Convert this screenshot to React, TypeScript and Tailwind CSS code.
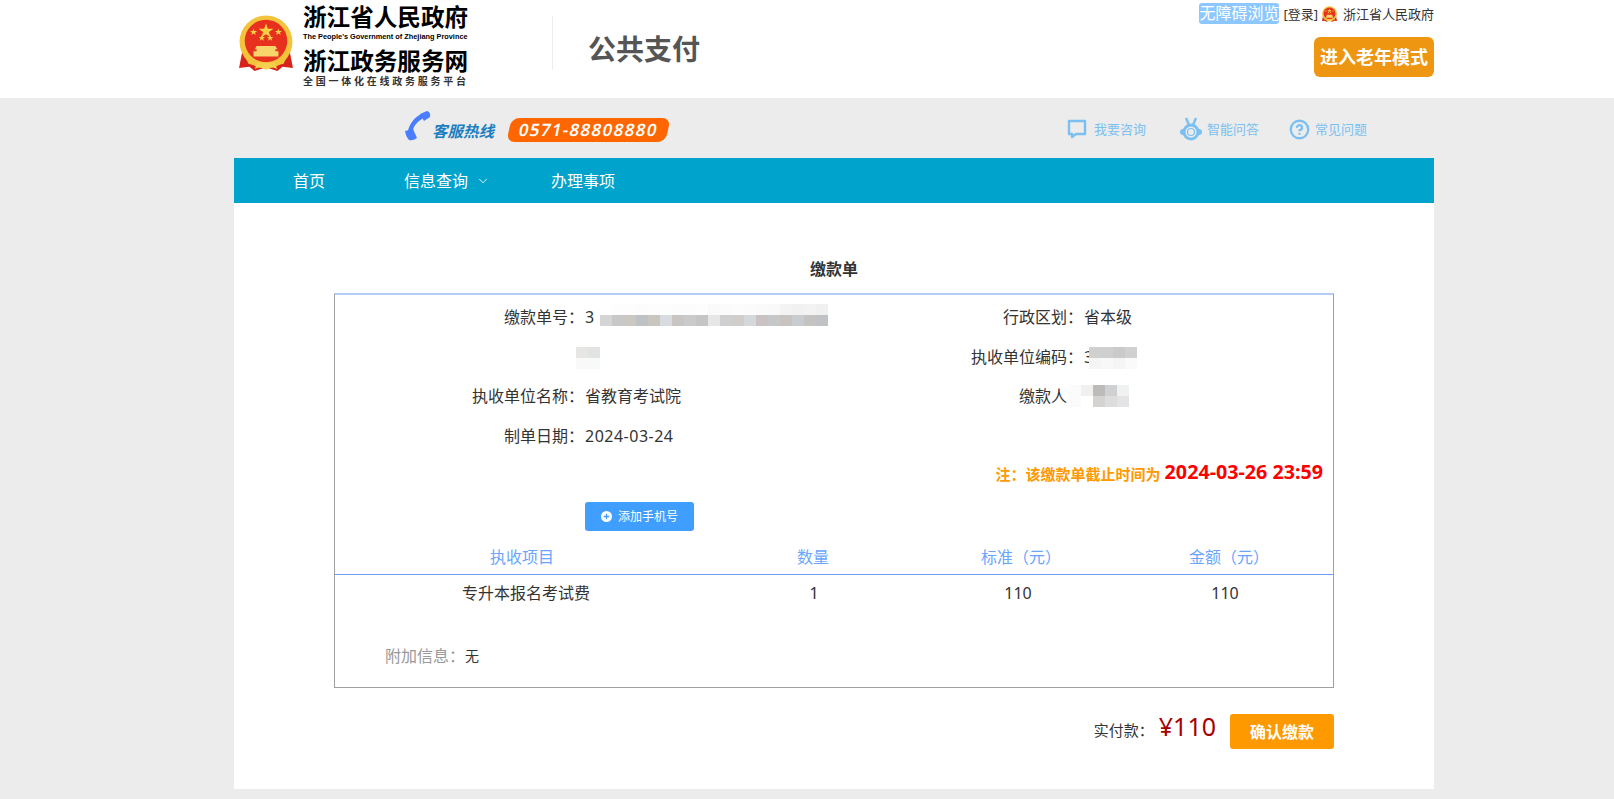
import { ChevronDown, CircleHelp } from 'lucide-react'

const font = "font-['Noto_Sans','Noto_Sans_CJK_SC',sans-serif]"

function Emblem({ className }: { className?: string }) {
  return (
    <svg viewBox="0 0 52 54" className={className}>
      <path d="M3 36 L0 51 L10 50 L15 54 L24 51 L28 51 L37 54 L42 50 L52 51 L49 36 Z" fill="#d8231c" />
      <circle cx="26" cy="26" r="25.5" fill="#f3c33c" />
      <circle cx="26" cy="25" r="20.5" fill="#e8301f" />
      <path d="M26 8 l1.8 5.2 5.4 0 -4.4 3.3 1.7 5.2 -4.5 -3.2 -4.5 3.2 1.7 -5.2 -4.4 -3.3 5.4 0z" fill="#f7d046" />
      <path d="M14 13 l.9 2.4 2.5 0 -2 1.6 .8 2.4 -2.2 -1.5 -2.2 1.5 .8 -2.4 -2 -1.6 2.5 0z" fill="#f7d046" />
      <path d="M38 13 l.9 2.4 2.5 0 -2 1.6 .8 2.4 -2.2 -1.5 -2.2 1.5 .8 -2.4 -2 -1.6 2.5 0z" fill="#f7d046" />
      <path d="M22 19 l.8 2.2 2.3 0 -1.8 1.4 .7 2.2 -2 -1.3 -2 1.3 .7 -2.2 -1.8 -1.4 2.3 0z" fill="#f7d046" />
      <path d="M30 19 l.8 2.2 2.3 0 -1.8 1.4 .7 2.2 -2 -1.3 -2 1.3 .7 -2.2 -1.8 -1.4 2.3 0z" fill="#f7d046" />
      <path d="M17 30 h18 l2 3 h-2 v2 h3 v5 h-24 v-5 h3 v-2 h-2z" fill="#f8d56a" />
      <path d="M6 40 q20 12 40 0 l-3 7 q-17 5 -34 0z" fill="#f3c33c" />
      <path d="M18 46 h16 l3 6 -6 -2 -5 3 -5 -3 -6 2z" fill="#f6d04d" />
    </svg>
  )
}

function Mosaic({ rows, className }: { rows: string[][]; className?: string }) {
  return (
    <div className={className}>
      {rows.map((row, i) => (
        <div key={i} className="flex">
          {row.map((cell, j) => (
            <div key={j} className={`w-3 h-[11px] ${cell}`} />
          ))}
        </div>
      ))}
    </div>
  )
}

const orderMosaic = [
  ['bg-[#ffffff]', 'bg-[#fdfdfd]', 'bg-[#fdfdfd]', 'bg-[#fcfcfc]', 'bg-[#fdfdfd]', 'bg-[#fdfdfd]', 'bg-[#fcfcfc]', 'bg-[#fcfcfc]', 'bg-[#fdfdfd]', 'bg-[#fafafa]', 'bg-[#fbfbfb]', 'bg-[#fcfcfc]', 'bg-[#fbfbfb]', 'bg-[#fafafa]', 'bg-[#f9f9f9]', 'bg-[#f3f3f3]', 'bg-[#f1f1f1]', 'bg-[#f3f3f3]', 'bg-[#f0f0f0]'],
  ['bg-[#d5d5d5]', 'bg-[#c8c8c8]', 'bg-[#cbc8c3]', 'bg-[#bfc2c5]', 'bg-[#c9c6c0]', 'bg-[#d8dce0]', 'bg-[#c9c5c3]', 'bg-[#c9cacc]', 'bg-[#c5c5c5]', 'bg-[#e6e6e6]', 'bg-[#cfcfcf]', 'bg-[#d0cdcb]', 'bg-[#d4d8db]', 'bg-[#c8c3c2]', 'bg-[#c5c7c8]', 'bg-[#c8c3c0]', 'bg-[#c8ccd0]', 'bg-[#c5c3c2]', 'bg-[#c0c2c5]'],
]

function Row({ label, labelClass, children }: { label: string; labelClass?: string; children: React.ReactNode }) {
  return (
    <div className="flex h-[39.8px] items-center">
      <div className={`w-[250px] shrink-0 text-right ${labelClass ?? ''}`}>{label}</div>
      <div className="flex items-center">{children}</div>
    </div>
  )
}

export default function App() {
  return (
    <div className={`min-h-[799px] bg-[#ececec] text-[16px] leading-6 text-[#333] ${font}`}>
      {/* Header */}
      <div className="h-[98px] bg-white">
        <div className="ml-[234px] flex h-full w-[1200px]">
          <Emblem className="ml-[5px] mt-[15px] h-[56px] w-[54px] shrink-0" />
          <div className="ml-[10px] flex w-[166px] shrink-0 flex-col text-black">
            <div className="mt-[3px] text-[23.6px] font-bold leading-[29px] whitespace-nowrap">浙江省人民政府</div>
            <div className="font-['Liberation_Sans',sans-serif] text-[7.35px] font-bold leading-[10px] whitespace-nowrap">The People's Government of Zhejiang Province</div>
            <div className="mt-[5px] text-[23.6px] font-bold leading-[28px] whitespace-nowrap">浙江政务服务网</div>
            <div className="text-[10px] font-bold leading-[13px] tracking-[2.75px] whitespace-nowrap text-[#333]">全国一体化在线政务服务平台</div>
          </div>
          <div className="ml-[83px] mt-[16px] h-[54px] w-px bg-[#eeeeee]" />
          <div className="ml-[35px] mt-[29px] text-[28px] font-bold leading-[40px] text-[#555]">公共支付</div>
          <div className="ml-auto flex flex-col items-end">
            <div className="mt-[3px] flex h-[21px] items-center">
              <span className="rounded-[3px] bg-[#8cc8ff] text-[16px] leading-[21px] text-white">无障碍浏览</span>
              <span className="ml-1 text-[13px] text-[#333]">[登录]</span>
              <Emblem className="ml-[4px] h-[16px] w-[15px]" />
              <span className="ml-[6px] text-[13px] text-[#333]">浙江省人民政府</span>
            </div>
            <div className="mt-[13px] flex h-10 w-[120px] items-center justify-center rounded-md bg-[#ee9611] text-[18px] font-bold text-white">进入老年模式</div>
          </div>
        </div>
      </div>

      {/* Hotline bar */}
      <div className="ml-[234px] flex h-[60px] w-[1200px] items-center">
        <svg viewBox="0 0 26 30" className="ml-[171px] mt-[-4px] h-[30px] w-[26px]">
          <path d="M20 4 C11 7 4 16 5 25" fill="none" stroke="#4a7dff" strokeWidth="4.5" />
          <path d="M15 3 L22 0 Q26 1 25 6 L19 10 Z M0 20 L8 18 L12 27 Q8 30 4 29 Q1 26 0 20 Z" fill="#4a7dff" />
        </svg>
        <span className="ml-[1px] mt-[6px] text-[15.5px] font-bold italic text-[#1a7fc1]">客服热线</span>
        <div className="ml-[15px] mt-[4px] flex h-6 w-[159px] -skew-x-12 items-center justify-center rounded-lg bg-[#ff6600] text-[17px] font-semibold leading-6 tracking-[1.3px] text-white">0571-88808880</div>
        <div className="ml-auto mr-[66px] mt-[2px] flex items-center text-[13px] text-[#7cbff0]">
          <svg viewBox="0 0 20 20" className="h-5 w-5">
            <path d="M2 2 H18 V15 H9 L5 18 V15 H2 Z" fill="none" stroke="#7cc0f2" strokeWidth="2.4" strokeLinejoin="round" />
          </svg>
          <span className="ml-[7px]">我要咨询</span>
          <svg viewBox="0 0 22 24" className="ml-[34px] h-6 w-[22px]">
            <path d="M6 1 L9 8 M16 1 L13 8" stroke="#7cc0f2" strokeWidth="2.4" fill="none" />
            <circle cx="11" cy="15" r="8.5" fill="#7cc0f2" />
            <rect x="0" y="12" width="22" height="6" rx="3" fill="#7cc0f2" />
            <circle cx="11" cy="15" r="5.5" fill="#ececec" />
            <circle cx="11" cy="15" r="3.5" fill="none" stroke="#7cc0f2" strokeWidth="1.2" />
          </svg>
          <span className="ml-[5px]">智能问答</span>
          <CircleHelp className="ml-[30px] size-[21px]" strokeWidth={2.6} color="#7cc0f2" />
          <span className="ml-[5px] mr-px">常见问题</span>
        </div>
      </div>

      {/* Nav */}
      <div className="ml-[234px] flex h-[45px] w-[1200px] items-center bg-[#00a3cb] text-white">
        <span className="ml-[59px]">首页</span>
        <span className="ml-[79px]">信息查询</span>
        <ChevronDown className="ml-[8px] size-3.5" strokeWidth={1.5} />
        <span className="ml-[61px]">办理事项</span>
      </div>

      {/* Main */}
      <div className="ml-[234px] h-[586px] w-[1200px] bg-white pt-[54px]">
        <div className="text-center font-bold">缴款单</div>
        <div className="ml-[100px] mt-[12px] h-[395px] w-[1000px] border border-t-2 border-[#a0a0a0] border-t-[#b3cdf8]">
          <div className="grid grid-cols-2 pt-[2px]">
            <Row label="缴款单号：" labelClass="pr-px">
              <span>3</span>
              <Mosaic rows={orderMosaic} className="ml-[6px] mt-[-4px]" />
            </Row>
            <Row label="行政区划：" labelClass="pr-px">
              <span className="pr-px">省本级</span>
            </Row>
            <Row label="">
              <Mosaic
                className="ml-[-9px] mt-[3px]"
                rows={[
                  ['bg-[#e8e6e4]', 'bg-[#e2e4e2]'],
                  ['bg-[#f9f9f9]', 'bg-[#f8fafa]'],
                ]}
              />
            </Row>
            <Row label="执收单位编码：" labelClass="pr-px">
              <span>3</span>
              <Mosaic
                className="ml-[-4px] mt-[3px]"
                rows={[
                  ['bg-[#d0d0d0]', 'bg-[#cfcfcf]', 'bg-[#cacaca]', 'bg-[#d0d0d0]'],
                  ['bg-[#f5f5f5]', 'bg-[#f8f8f8]', 'bg-[#f5f5f5]', 'bg-[#fafafa]'],
                ]}
              />
            </Row>
            <Row label="执收单位名称：" labelClass="pr-px">
              <span>省教育考试院</span>
            </Row>
            <Row label="缴款人" labelClass="pr-[17px]">
              <Mosaic
                className="ml-[-15px]"
                rows={[
                  ['bg-[#fbfbfb]', 'bg-[#f2f0ef]', 'bg-[#bdbbb9]', 'bg-[#cfd0d2]', 'bg-[#f0f2f2]'],
                  ['bg-[#fbfbfb]', 'bg-[#ffffff]', 'bg-[#d5d3d2]', 'bg-[#dddddd]', 'bg-[#e4e4e6]'],
                ]}
              />
            </Row>
            <Row label="制单日期：" labelClass="pr-px">
              <span className="tracking-[0.5px]">2024-03-24</span>
            </Row>
          </div>

          <div className="flex h-[39px] items-center justify-end pb-[4px] pr-[10px] font-bold">
            <span className="text-[15px] text-[#ff9900]">注：该缴款单截止时间为</span>
            <span className="ml-1 mt-[-3px] text-[19.7px] text-[#ff0000]">2024-03-26 23:59</span>
          </div>

          <button className="ml-[250px] mt-[7px] flex h-[29px] w-[109px] items-center justify-center rounded-[3px] bg-[#409eff] text-[12px] text-white">
            <svg viewBox="0 0 12 12" className="mr-[6px] size-[11px]">
              <circle cx="6" cy="6" r="6" fill="#fff" />
              <path d="M6 3 V9 M3 6 H9" stroke="#409eff" strokeWidth="1.4" />
            </svg>
            添加手机号
          </button>

          <div className="grid h-[44px] grid-cols-[376px_206px_202px_1fr] items-center border-b border-[#6f9fee] pt-[8px] text-center text-[#6aa5ff]">
            <div className="pr-0.5">执收项目</div>
            <div className="pr-0.5">数量</div>
            <div className="pl-1.5">标准（元）</div>
            <div className="pl-[6px]">金额（元）</div>
          </div>
          <div className="grid h-[35px] grid-cols-[376px_206px_202px_1fr] items-center text-center">
            <div className="pl-[6px]">专升本报名考试费</div>
            <div>1</div>
            <div>110</div>
            <div className="pr-0.5">110</div>
          </div>

          <div className="ml-[50px] mt-[34px] flex items-center">
            <span className="text-[#999]">附加信息：</span>
            <span className="text-[14px]">无</span>
          </div>
        </div>

        <div className="ml-[100px] mt-[26px] flex h-[35px] w-[1000px] items-center justify-end">
          <span className="mb-[4px] text-[15px]">实付款：</span>
          <span className="ml-[5px] mt-[-11px] text-[25px] text-[#a80000]">¥110</span>
          <button className="ml-[14px] h-[35px] w-[104px] rounded-[3px] bg-[#ff9900] font-bold text-white">确认缴款</button>
        </div>
      </div>
    </div>
  )
}
